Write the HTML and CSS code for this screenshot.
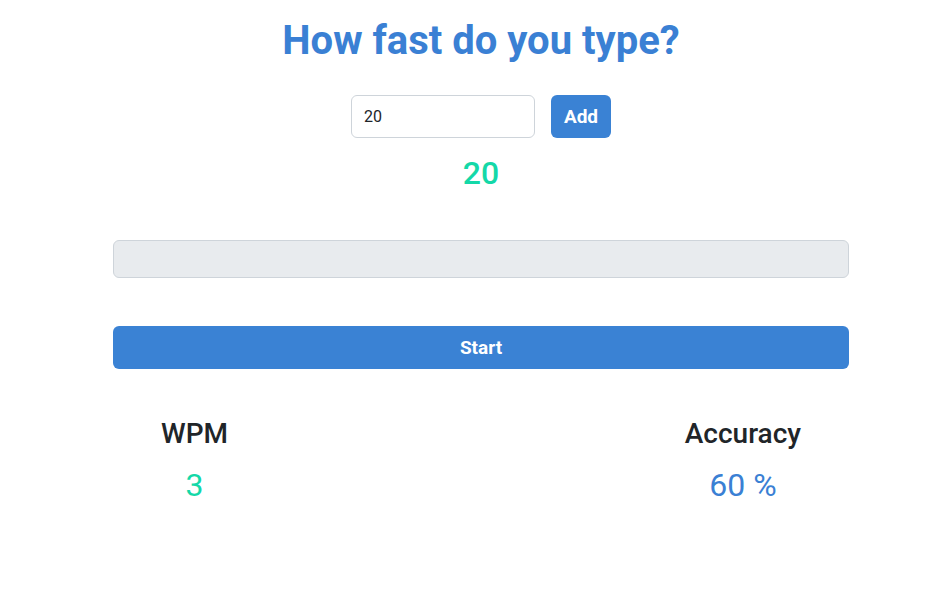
FILE: index.html
```html
<!DOCTYPE html>
<html lang="en">
<head>
<meta charset="utf-8">
<title>How fast do you type?</title>
<link rel="stylesheet" href="styles.css">
</head>
<body>
<div class="app">
  <h1 class="title">How fast do you type?</h1>
  <div class="add-row">
    <input class="count-input" type="text" value="20">
    <button class="btn btn-add">Add</button>
  </div>
  <div class="count">20</div>
  <input class="type-input" type="text" disabled>
  <button class="btn btn-start">Start</button>
  <div class="stats">
    <div class="stat">
      <div class="stat-label">WPM</div>
      <div class="stat-value teal">3</div>
    </div>
    <div class="stat">
      <div class="stat-label">Accuracy</div>
      <div class="stat-value blue">60 %</div>
    </div>
  </div>
</div>
</body>
</html>
```

FILE: styles.css
```css
* { box-sizing: border-box; }
html, body { margin: 0; background: #fff; }
body {
  padding-left: 12px;
  font-family: Roboto, "Liberation Sans", sans-serif;
  color: #212529;
}
.app {
  width: 736px;
  margin: 0 auto;
  display: flex;
  flex-direction: column;
  align-items: center;
}
.title {
  margin: 16px 0 0;
  font-size: 40px;
  font-weight: 700;
  line-height: 50px;
  color: #3a80d4;
}
.add-row {
  margin-top: 29px;
  display: flex;
  gap: 16px;
}
.count-input {
  width: 184px;
  height: 43px;
  border: 1px solid #ced4da;
  border-radius: 6px;
  padding: 0 12px;
  font-family: inherit;
  font-size: 16px;
  color: #212529;
  outline: none;
}
.btn {
  border: none;
  border-radius: 6px;
  background: #3a82d4;
  color: #fff;
  font-family: inherit;
  font-weight: 700;
  font-size: 19px;
  cursor: pointer;
}
.btn-add {
  width: 60px;
  height: 43px;
}
.count {
  margin-top: 16px;
  font-size: 32px;
  font-weight: 500;
  line-height: 38px;
  color: #14d8a8;
}
.type-input {
  margin-top: 48px;
  width: 100%;
  height: 38px;
  border: 1px solid #ced4da;
  border-radius: 6px;
  background: #e8ebee;
}
.btn-start {
  margin-top: 48px;
  width: 100%;
  height: 43px;
}
.stats {
  margin-top: 48px;
  width: 100%;
  padding: 0 48px;
  display: flex;
  justify-content: space-between;
}
.stat {
  display: flex;
  flex-direction: column;
  align-items: center;
  gap: 16px;
}
.stat-label {
  font-size: 28px;
  font-weight: 500;
  line-height: 34px;
}
.stat-value {
  font-size: 32px;
  line-height: 36px;
}
.teal { color: #14d8a8; }
.blue { color: #3a80d4; }
```
